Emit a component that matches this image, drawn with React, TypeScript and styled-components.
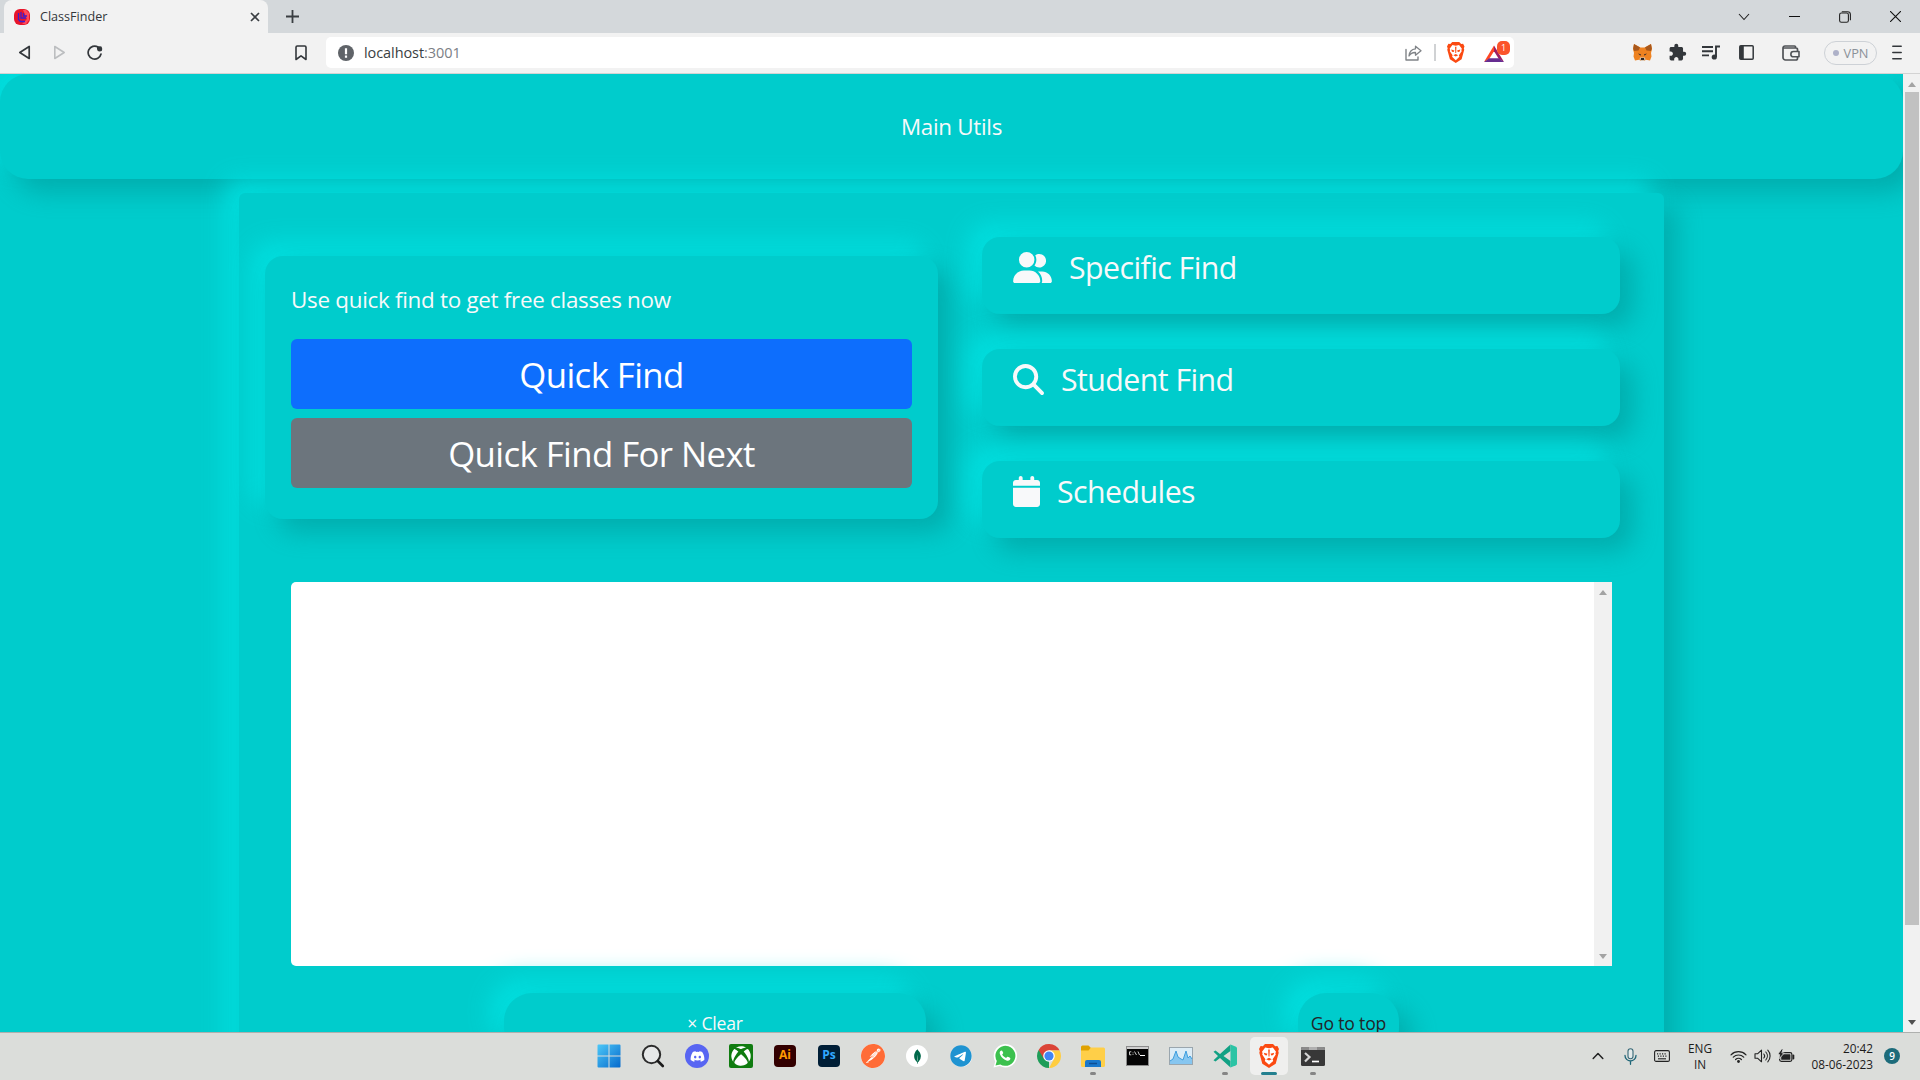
import React from "react";
import styled, { createGlobalStyle } from "styled-components";
import { FaUserGroup, FaMagnifyingGlass, FaCalendar, FaDiscord, FaXbox, FaTelegram } from "react-icons/fa6";
import { SiPostman, SiMongodb } from "react-icons/si";
import { MdExtension } from "react-icons/md";

const Global = createGlobalStyle`
  * { box-sizing: border-box; }
  html, body { margin: 0; padding: 0; }
  body {
    width: 1920px;
    height: 1080px;
    overflow: hidden;
    font-family: "Open Sans", "Noto Sans", sans-serif;
  }
  svg { display: block; flex: none; }
`;

const TEAL = "#00cccc";
const raised = "13px 13px 26px #00adad, -13px -13px 26px #00e0e0";

const Desktop = styled.div`
  width: 1920px;
  height: 1080px;
  display: flex;
  flex-direction: column;
  overflow: hidden;
`;

/* ---------- browser chrome ---------- */

const TabStrip = styled.div`
  height: 33px;
  flex: none;
  background: #d4d8db;
  display: flex;
  align-items: center;
  padding-left: 4px;
`;

const Tab = styled.div`
  width: 264px;
  height: 33px;
  border-radius: 8px 8px 0 0;
  background: #f2f2f2;
  display: flex;
  align-items: center;
  padding: 0 8px 0 10px;
`;

const TabTitle = styled.span`
  flex: 1;
  margin-left: 10px;
  font-size: 12.6px;
  line-height: 16px;
  color: #33373b;
`;

const Slot = styled.div<{ $w: number; $ml?: number }>`
  width: ${(p) => p.$w}px;
  margin-left: ${(p) => p.$ml ?? 0}px;
  flex: none;
  display: flex;
  align-items: center;
  justify-content: center;
`;

const Spacer = styled.div`
  flex: 1;
`;

const Toolbar = styled.div`
  height: 41px;
  flex: none;
  background: #f2f2f2;
  border-bottom: 1px solid #d3d3d3;
  display: flex;
  align-items: center;
  padding: 0 18px 1px 18px;
`;

const AddressBar = styled.div`
  width: 1188px;
  height: 31px;
  margin-left: 19px;
  border-radius: 5px;
  background: #fff;
  display: flex;
  align-items: center;
  padding: 0 4px 0 12px;
`;

const Url = styled.span`
  flex: 1;
  margin-left: 10px;
  font-size: 14.5px;
  letter-spacing: -0.08px;
  line-height: 20px;
  color: #3a3e42;
`;

const Port = styled.span`
  color: #7b8085;
`;

const Divider = styled.div`
  width: 2px;
  height: 17px;
  margin-left: 12px;
  background: #d0d2d4;
`;

const Rewards = styled.div`
  position: relative;
  width: 26px;
  height: 24px;
  margin-left: 18px;
  padding: 4px 0 0 0;
`;

const RewardsBadge = styled.span`
  position: absolute;
  top: 0;
  right: 0;
  width: 13px;
  height: 14px;
  border-radius: 5px;
  background: #fb542b;
  color: #fff;
  font-size: 9px;
  line-height: 14px;
  text-align: center;
`;

const Vpn = styled.div`
  width: 53px;
  height: 24px;
  margin-left: 24px;
  border: 1px solid #cdd1d6;
  border-radius: 12px;
  display: flex;
  align-items: center;
  justify-content: center;
  gap: 5px;
  font-size: 12.8px;
  color: #8a9199;
`;

const VpnDot = styled.i`
  width: 6px;
  height: 6px;
  border-radius: 3px;
  background: #aeb1c8;
`;

/* ---------- page ---------- */

const Viewport = styled.div`
  height: 958px;
  flex: none;
  display: flex;
  overflow: hidden;
`;

const Page = styled.main`
  width: 1903px;
  height: 958px;
  flex: none;
  overflow: hidden;
  background: ${TEAL};
`;

const Scrollbar = styled.div<{ $w: number }>`
  width: ${(p) => p.$w}px;
  flex: none;
  background: #f1f1f1;
  display: flex;
  flex-direction: column;
  align-items: center;
  justify-content: space-between;
  padding: 8px 0 7px;
`;

const Thumb = styled.div`
  width: 14px;
  height: 833px;
  margin-top: 5px;
  margin-bottom: auto;
  background: #c1c1c1;
`;

const Arrow = styled.i<{ $down?: boolean; $color: string }>`
  width: 0;
  height: 0;
  border: 4px solid transparent;
  border-top: ${(p) => (p.$down ? `5px solid ${p.$color}` : "0")};
  border-bottom: ${(p) => (p.$down ? "0" : `5px solid ${p.$color}`)};
`;

const Header = styled.header`
  height: 105px;
  border-radius: 28px;
  background: ${TEAL};
  box-shadow: ${raised};
  display: flex;
  align-items: center;
  justify-content: center;
  font-size: 22.4px;
  letter-spacing: -0.3px;
  line-height: 30px;
  color: #f8f9fa;
`;

const Container = styled.section`
  width: 1425px;
  height: 1000px;
  margin: 14px auto 0;
  border-radius: 6px;
  background: ${TEAL};
  box-shadow: ${raised};
  padding: 44px 44px 0 26px;
`;

const Columns = styled.div`
  display: flex;
  justify-content: space-between;
`;

const QuickCard = styled.div`
  width: 673px;
  height: 263px;
  margin-top: 19px;
  border-radius: 18px;
  background: ${TEAL};
  box-shadow: ${raised};
  padding: 29px 26px 0;
`;

const Hint = styled.p`
  margin: 0 0 24px;
  font-size: 22.4px;
  letter-spacing: -0.28px;
  line-height: 30px;
  color: #f8f9fa;
`;

const ActionButton = styled.button<{ $bg: string }>`
  display: block;
  width: 621px;
  height: 70px;
  margin: 0 0 9px;
  padding: 1px 0 0;
  border: 0;
  border-radius: 6px;
  background: ${(p) => p.$bg};
  color: #fff;
  font-family: inherit;
  font-size: 34.8px;
  letter-spacing: -0.6px;
  line-height: 50px;
`;

const Links = styled.div`
  width: 638px;
  display: flex;
  flex-direction: column;
  gap: 35px;
`;

const LinkCard = styled.a`
  height: 77px;
  border-radius: 18px;
  background: ${TEAL};
  box-shadow: ${raised};
  display: flex;
  align-items: flex-start;
  gap: 17px;
  padding: 15px 30px 0 31px;
  color: #f8f9fa;
`;

const LinkLabel = styled.span`
  margin-top: -4px;
  font-size: 30.3px;
  letter-spacing: -0.55px;
  line-height: 40px;
`;

const Output = styled.div`
  width: 1321px;
  height: 384px;
  margin: 44px 0 0 26px;
  border-radius: 5px 0 0 5px;
  background: #fff;
  display: flex;
  justify-content: flex-end;
  overflow: hidden;
`;

const Footer = styled.div`
  display: flex;
  justify-content: space-between;
  margin-top: 27px;
  padding: 0 221px 0 239px;
`;

const PillButton = styled.button<{ $w: number; $color: string }>`
  width: ${(p) => p.$w}px;
  height: 63px;
  padding: 0 0 3px;
  border: 0;
  border-radius: 28px;
  background: ${TEAL};
  box-shadow: ${raised};
  font-family: inherit;
  font-size: 17.6px;
  letter-spacing: -0.18px;
  line-height: 26px;
  color: ${(p) => p.$color};
`;

/* ---------- taskbar ---------- */

const Taskbar = styled.footer`
  height: 48px;
  flex: none;
  background: #dbddda;
  border-top: 1px solid #aeb0ae;
  display: flex;
  align-items: center;
  padding: 0 20px 1px 587px;
`;

const AppSlot = styled.div<{ $active?: boolean }>`
  position: relative;
  width: 38px;
  height: 38px;
  margin: 0 3px;
  border-radius: 5px;
  background: ${(p) => (p.$active ? "#efefee" : "transparent")};
  display: flex;
  align-items: center;
  justify-content: center;
`;

const Running = styled.i<{ $active?: boolean }>`
  position: absolute;
  left: 50%;
  bottom: 0;
  width: ${(p) => (p.$active ? 16 : 6)}px;
  height: 3px;
  border-radius: 2px;
  background: ${(p) => (p.$active ? "#24808f" : "#858585")};
  transform: translateX(-50%);
`;

const Tile = styled.div<{ $bg: string; $fg: string }>`
  width: 22px;
  height: 22px;
  border-radius: 4px;
  background: ${(p) => p.$bg};
  color: ${(p) => p.$fg};
  font-size: 12px;
  font-weight: 700;
  line-height: 20px;
  text-align: center;
`;

const Disc = styled.div<{ $bg: string; $fg: string; $d?: number }>`
  width: ${(p) => p.$d ?? 24}px;
  height: ${(p) => p.$d ?? 24}px;
  border-radius: 50%;
  background: ${(p) => p.$bg};
  color: ${(p) => p.$fg};
  display: flex;
  align-items: center;
  justify-content: center;
`;

const XboxTile = styled.div`
  width: 24px;
  height: 24px;
  border-radius: 2px;
  background: #107c10;
  color: #fff;
  display: flex;
  align-items: center;
  justify-content: center;
`;

const TrayText = styled.div<{ $w: number; $ml: number; $right?: boolean }>`
  width: ${(p) => p.$w}px;
  margin-left: ${(p) => p.$ml}px;
  font-size: 11.8px;
  line-height: 16px;
  color: #1b1b1b;
  white-space: nowrap;
  text-align: ${(p) => (p.$right ? "right" : "center")};
`;

const CountBadge = styled.div`
  width: 16px;
  height: 16px;
  margin-left: 11px;
  border-radius: 8px;
  background: #1c6b7a;
  color: #fff;
  font-size: 10px;
  font-weight: 600;
  line-height: 16px;
  text-align: center;
`;

/* ---------- drawings ---------- */

const BraveMark = ({ h }: { h: number }) => (
  <svg width={(h * 20) / 24} height={h} viewBox="0 0 20 24">
    <path d="M6 0h8l2.200 2.300 2.200-.2L20 5l-.8 2 .5 1.800-3 11L10 24l-6.700-4.200-3-11L.8 7 0 5l1.600-2.900 2.200.2z" fill="#fb4a12" />
    <path d="M6.200 3.500L10 4.200l3.800-.7 3.200 4.200-.6 1.500.4 1.300-3.200 4.700.6 1.700L10 20.800l-4.200-3.900.6-1.700-3.200-4.700.4-1.300L3 7.700z" fill="#fff" />
    <path d="M4.800 8.700l3.700 1-.9 1.700-1.900-.3zM15.200 8.700l-3.700 1 .9 1.700 1.900-.3zM9.200 5.500h1.600l-.3 7h-1zM7.200 15.200l2.800-1.400 2.800 1.400-2.800 1.300z" fill="#fb4a12" />
  </svg>
);

const Favicon = () => (
  <svg width="16" height="16" viewBox="0 0 16 16">
    <rect width="16" height="16" rx="6" fill="#e8152b" />
    <path d="M9 1h3l3 3v7l-3 4H8l5-5z" fill="#ff4a5c" />
    <path d="M4.500 4v6.500l2 2H11M7 3v6h5M9.500 4v3H13" stroke="#3b1fd0" strokeWidth="1.300" fill="none" />
  </svg>
);

const Chrome = () => (
  <svg width="24" height="24" viewBox="0 0 24 24">
    <path d="M12 12v12A12 12 0 0 1 1.610 6z" fill="#1e9d58" />
    <path d="M12 6.500h10.650A12 12 0 0 0 1.610 6L7 15z" fill="#db4437" />
    <path d="M12 6.500h10.650A12 12 0 0 1 12 24l5-9z" fill="#ffcd40" />
    <circle cx="12" cy="12" r="5.800" fill="#fff" />
    <circle cx="12" cy="12" r="4.600" fill="#4285f4" />
  </svg>
);

const Fox = () => (
  <svg width="19" height="17" viewBox="0 0 19 17">
    <path d="M1 0l6.500 3.500h4L18 0l1 5-1 4 .5 3.500-1.500 4-4-.8L11 17H8l-2-1.300-4 .8-1.500-4L1 9 0 5z" fill="#ee8220" />
    <path d="M1 0l6 3.500L5.500 6.500 1 7 .2 4.500zM18 0l-6 3.500 1.500 3 4.500.5.800-2.500z" fill="#a8581c" />
    <path d="M5 9.500l3 .8-.6 1.400zM14 9.500l-3 .8.600 1.400z" fill="#3a2f2f" />
    <path d="M7 13.500h5l.5 2-1.500 1.500H8l-1.500-1.500z" fill="#d8c8b8" />
    <path d="M8 14h3l.3 2H7.700z" fill="#2b2320" />
  </svg>
);

const line = { fill: "none", strokeLinecap: "round", strokeLinejoin: "round" } as const;

export default function App() {
  return (
    <Desktop>
      <Global />
      <TabStrip>
        <Tab>
          <Favicon />
          <TabTitle>ClassFinder</TabTitle>
          <svg width="10" height="10" viewBox="0 0 10 10"><path d="M1 1l8 8M9 1l-8 8" stroke="#3a3e42" strokeWidth="1.700" /></svg>
        </Tab>
        <Slot $w={13} $ml={18}>
          <svg width="13" height="13" viewBox="0 0 13 13"><path d="M6.500 0v13M0 6.500h13" stroke="#3a3e42" strokeWidth="1.800" /></svg>
        </Slot>
        <Spacer />
        <Slot $w={12}>
          <svg width="12" height="8" viewBox="0 0 12 8"><path d="M1 1l5 5.500L11 1" stroke="#222" strokeWidth="1.100" fill="none" /></svg>
        </Slot>
        <Slot $w={11} $ml={39}>
          <svg width="11" height="11" viewBox="0 0 11 11"><path d="M0 5.500h11" stroke="#111" /></svg>
        </Slot>
        <Slot $w={12} $ml={39}>
          <svg width="12" height="12" viewBox="0 0 12 12">
            <rect x=".6" y="2" width="8.800" height="9.200" rx="1.800" fill="none" stroke="#222" strokeWidth="1.100" />
            <path d="M2.800.7h5.800a2.800 2.800 0 0 1 2.800 2.800v5.800" fill="none" stroke="#222" strokeWidth="1.100" />
          </svg>
        </Slot>
        <Slot $w={11} $ml={39}>
          <svg width="11" height="11" viewBox="0 0 11 11"><path d="M0 0l11 11M11 0L0 11" stroke="#111" strokeWidth="1.100" /></svg>
        </Slot>
        <Slot $w={19} />
      </TabStrip>

      <Toolbar>
        <svg width="13" height="15" viewBox="0 0 13 15"><path d="M11.200 1.500v12L1.800 7.500z" {...line} stroke="#33373b" strokeWidth="1.700" /></svg>
        <Slot $w={13} $ml={22}>
          <svg width="13" height="15" viewBox="0 0 13 15"><path d="M1.800 1.500v12l9.400-6z" {...line} stroke="#bcbec0" strokeWidth="1.600" /></svg>
        </Slot>
        <Slot $w={16} $ml={21}>
          <svg width="16" height="16" viewBox="0 0 16 16">
            <path d="M11 2A6.500 6.500 0 1 0 14 9" {...line} stroke="#33373b" strokeWidth="1.700" />
            <path d="M10 1.500h4.500v4.300H12L10 4z" fill="#33373b" />
            <circle cx="12.700" cy="4" r="2.500" fill="#33373b" />
          </svg>
        </Slot>
        <Slot $w={12} $ml={192}>
          <svg width="12" height="16" viewBox="0 0 12 16"><path d="M1 2.200Q1 1 2.200 1h7.600Q11 1 11 2.200V14.500L6 10.800 1 14.500z" {...line} stroke="#33373b" strokeWidth="1.600" /></svg>
        </Slot>
        <AddressBar>
          <svg width="16" height="16" viewBox="0 0 16 16">
            <circle cx="8" cy="8" r="8" fill="#5f6368" />
            <path d="M8 3.200v6M8 10.600v2.200" stroke="#fff" strokeWidth="2.200" />
          </svg>
          <Url>localhost<Port>:3001</Port></Url>
          <svg width="17" height="16" viewBox="0 0 17 16">
            <path d="M1 4.500V15h12v-3" {...line} stroke="#808488" strokeWidth="1.400" />
            <path d="M10.500 1.200L16 5.800l-5.500 4.400V7.500C7.500 7.300 5.500 8.500 4 11c.3-4 2.500-6.800 6.500-7.200z" {...line} stroke="#808488" strokeWidth="1.300" />
          </svg>
          <Divider />
          <Slot $w={20} $ml={10}><BraveMark h={21} /></Slot>
          <Rewards>
            <svg width="20" height="18" viewBox="0 0 21 18">
              <path d="M10.500 0L0 17.500l5.500-3.500 5-8z" fill="#ff4724" />
              <path d="M10.500 0v6l5 8 5.500 3.500z" fill="#9e1f63" />
              <path d="M0 17.500h21L15.500 13.500h-10z" fill="#662d91" />
            </svg>
            <RewardsBadge>1</RewardsBadge>
          </Rewards>
        </AddressBar>
        <Spacer />
        <Fox />
        <Slot $w={18} $ml={16}><MdExtension size={19} color="#33373b" /></Slot>
        <Slot $w={18} $ml={16}>
          <svg width="18" height="15" viewBox="0 0 18 15">
            <path d="M0 2h11M0 6.200h11M0 10.400h7" stroke="#33373b" strokeWidth="1.900" />
            <path d="M14 12V1.500h4" stroke="#33373b" strokeWidth="1.900" fill="none" />
            <circle cx="12.300" cy="12" r="2.600" fill="#33373b" />
          </svg>
        </Slot>
        <Slot $w={15} $ml={19}>
          <svg width="15" height="15" viewBox="0 0 15 15">
            <rect x=".8" y=".8" width="13.400" height="13.400" rx="1" fill="none" stroke="#33373b" strokeWidth="1.500" />
            <path d="M1 1h3.800v13H1z" fill="#33373b" />
          </svg>
        </Slot>
        <Slot $w={18} $ml={28}>
          <svg width="18" height="16" viewBox="0 0 18 16">
            <path d="M15.500 6V4.500a1.500 1.500 0 0 0-1.500-1.500H2.500M13.500 3V2A1 1 0 0 0 12.500 1H3a2 2 0 0 0-2 2v9.500A2.500 2.500 0 0 0 3.500 15H14a1.500 1.500 0 0 0 1.500-1.500V12" {...line} stroke="#505357" strokeWidth="1.700" />
            <path d="M17 6.500h-5.500a2.600 2.600 0 0 0 0 5.300H17z" {...line} stroke="#505357" strokeWidth="1.600" />
          </svg>
        </Slot>
        <Vpn><VpnDot />VPN</Vpn>
        <Slot $w={10} $ml={15}>
          <svg width="10" height="15" viewBox="0 0 10 15"><path d="M.8 1.200h8.400M.8 7.500h8.400M.8 13.800h8.400" {...line} stroke="#33373b" strokeWidth="1.500" /></svg>
        </Slot>
      </Toolbar>

      <Viewport>
        <Page>
          <Header>Main Utils</Header>
          <Container>
            <Columns>
              <QuickCard>
                <Hint>Use quick find to get free classes now</Hint>
                <ActionButton $bg="#0d6efd">Quick Find</ActionButton>
                <ActionButton $bg="#6c757d">Quick Find For Next</ActionButton>
              </QuickCard>
              <Links>
                <LinkCard><FaUserGroup style={{ width: 39, height: 31 }} /><LinkLabel>Specific Find</LinkLabel></LinkCard>
                <LinkCard><FaMagnifyingGlass size={31} /><LinkLabel>Student Find</LinkLabel></LinkCard>
                <LinkCard><FaCalendar style={{ width: 27, height: 31 }} /><LinkLabel>Schedules</LinkLabel></LinkCard>
              </Links>
            </Columns>
            <Output>
              <Scrollbar $w={18}>
                <Arrow $color="#a3a3a3" />
                <Arrow $down $color="#a3a3a3" />
              </Scrollbar>
            </Output>
            <Footer>
              <PillButton $w={422} $color="#f8f9fa">× Clear</PillButton>
              <PillButton $w={101} $color="#212529">Go to top</PillButton>
            </Footer>
          </Container>
        </Page>
        <Scrollbar $w={17}>
          <Arrow $color="#a3a3a3" />
          <Thumb />
          <Arrow $down $color="#505050" />
        </Scrollbar>
      </Viewport>

      <Taskbar>
        <AppSlot>
          <svg width="24" height="24" viewBox="0 0 24 24">
            <defs>
              <linearGradient id="win" x1="0" y1="0" x2="1" y2="1"><stop offset="0" stopColor="#4cc8f8" /><stop offset="1" stopColor="#0669cc" /></linearGradient>
            </defs>
            <path d="M.5 1.500q0-1 1-1h10v11H.5zM12.500.5h10q1 0 1 1v10h-11zM.5 12.500h11v11h-10q-1 0-1-1zM12.500 12.500h11v10q0 1-1 1h-10z" fill="url(#win)" />
          </svg>
        </AppSlot>
        <AppSlot>
          <svg width="24" height="24" viewBox="0 0 24 24">
            <circle cx="10.500" cy="10.500" r="8.700" fill="#e6e8e8" stroke="#2b2b2b" strokeWidth="2" />
            <path d="M16.800 17l5 5" stroke="#1b1b1b" strokeWidth="2.600" strokeLinecap="round" />
          </svg>
        </AppSlot>
        <AppSlot><Disc $bg="#5865f2" $fg="#fff"><FaDiscord size={15} /></Disc></AppSlot>
        <AppSlot><XboxTile><FaXbox size={20} /></XboxTile></AppSlot>
        <AppSlot><Tile $bg="#330000" $fg="#ff9a00">Ai</Tile></AppSlot>
        <AppSlot><Tile $bg="#001e36" $fg="#31a8ff">Ps</Tile></AppSlot>
        <AppSlot><Disc $bg="#fff" $fg="#ff6c37"><SiPostman size={24} /></Disc></AppSlot>
        <AppSlot><Disc $bg="#fff" $fg="#00684a" $d={22}><SiMongodb size={15} /></Disc></AppSlot>
        <AppSlot><Disc $bg="#fff" $fg="#1f93d1" $d={21}><FaTelegram size={22} /></Disc></AppSlot>
        <AppSlot>
          <svg width="24" height="24" viewBox="0 0 24 24">
            <path d="M.5 23.500l1.700-6A11.700 11.700 0 1 1 6.800 22z" fill="#fff" />
            <path d="M2.500 21.500l1.300-4.600A10 10 0 1 1 7.300 20.400z" fill="#3cc14e" />
            <path d="M8.500 6.500c-1.800 0-2.300 2.300-1.300 4.300 1.300 2.700 3.400 4.700 6.200 5.700 2.500.8 4-.5 4-2.200 0-.7-2.800-2-3.200-1.600l-1.100 1.300c-1.700-.6-3-1.700-3.900-3.400l1-1.400c.2-.5-.9-2.700-1.700-2.700z" fill="#fff" />
          </svg>
        </AppSlot>
        <AppSlot><Chrome /></AppSlot>
        <AppSlot>
          <svg width="24" height="24" viewBox="0 0 24 24">
            <path d="M0 3q0-1.500 1.500-1.500h6L10 4v4H0z" fill="#e0a200" />
            <path d="M0 6.500h7.500l2.500-3h12.500q1.500 0 1.500 1.500v16.500q0 1.500-1.500 1.500h-21Q0 23 0 21.500z" fill="#ffcf48" />
            <path d="M4 23v-5q0-2 2-2h12q2 0 2 2v5z" fill="#1a78cc" />
            <path d="M8 19.500h8" stroke="#0f4f94" strokeWidth="1.500" />
          </svg>
          <Running />
        </AppSlot>
        <AppSlot>
          <svg width="23" height="20" viewBox="0 0 23 20">
            <rect x=".5" y=".5" width="22" height="19" fill="#050505" stroke="#8c8c8c" />
            <path d="M1 1h21v2H1z" fill="#cfcfcf" />
            <path d="M5.300 5.800H3.500v3h1.800M7 6.500v.8M7 8.200V9M8.500 5.500l2 3.500M12 5.500l1.500 3.500" stroke="#e0e0e0" strokeWidth=".9" fill="none" />
            <path d="M14 9.500h5" stroke="#fff" />
          </svg>
        </AppSlot>
        <AppSlot>
          <svg width="24" height="18" viewBox="0 0 24 18">
            <rect x=".5" y=".5" width="23" height="17" fill="#dcecf6" stroke="#9aa6ae" />
            <path d="M1 14l3-2 3-8 2 6 3 2 2 1 3-9 2 7 2-2 2 3v5H1z" fill="#86c6f0" />
            <path d="M1 14l3-2 3-8 2 6 3 2 2 1 3-9 2 7 2-2 2 3" fill="none" stroke="#3e9ede" />
          </svg>
        </AppSlot>
        <AppSlot>
          <svg width="24" height="24" viewBox="0 0 24 24">
            <path d="M17.500.5L7 10 2.500 6.500.5 7.700 5 12 .5 16.300l2 1.200L7 14l10.500 9.500V17L10.500 12l7-5z" fill="#12a184" />
            <path d="M17.500.5L23 2.800q1 .5 1 1.500v15.400q0 1-1 1.500l-5.500 2.300z" fill="#2bc4a5" />
          </svg>
          <Running />
        </AppSlot>
        <AppSlot $active><BraveMark h={24} /><Running $active /></AppSlot>
        <AppSlot>
          <svg width="24" height="19" viewBox="0 0 24 19">
            <rect width="24" height="19" rx="1.500" fill="#383838" />
            <path d="M0 3V1.500Q0 0 1.500 0h21Q24 0 24 1.500V3z" fill="#8b8b8b" />
            <path d="M8 0h8v3H8z" fill="#b0b0b0" />
            <path d="M4 6l4.500 4L4 14.500" stroke="#d5d5d5" strokeWidth="2.200" fill="none" />
            <path d="M11 14.500h7" stroke="#fff" strokeWidth="1.700" />
          </svg>
          <Running />
        </AppSlot>
        <Spacer />
        <svg width="12" height="8" viewBox="0 0 12 8"><path d="M1.200 6.500L6 1.500l4.800 5" {...line} stroke="#222" strokeWidth="1.500" /></svg>
        <Slot $w={13} $ml={20}>
          <svg width="13" height="17" viewBox="0 0 13 17">
            <rect x="4" y=".7" width="5" height="10" rx="2.500" fill="#e3eaea" stroke="#376877" strokeWidth="1.100" />
            <path d="M1 7.500a5.500 5.500 0 0 0 11 0M6.500 13v3.300" {...line} stroke="#1d6577" strokeWidth="1.300" />
          </svg>
        </Slot>
        <Slot $w={16} $ml={17}>
          <svg width="16" height="12" viewBox="0 0 16 12">
            <rect x=".6" y=".6" width="14.800" height="10.800" rx="1.500" fill="none" stroke="#222" strokeWidth="1.100" />
            <path d="M3 3.800h10M3.800 6.200h9" stroke="#222" strokeWidth="1.200" strokeDasharray="1.200 1.300" />
            <path d="M4 8.800h8" stroke="#222" strokeWidth="1.100" />
          </svg>
        </Slot>
        <TrayText $w={30} $ml={15}>ENG<br />IN</TrayText>
        <Slot $w={17} $ml={15}>
          <svg width="17" height="13" viewBox="0 0 17 13">
            <path d="M1 4.800a10.600 10.600 0 0 1 15 0M3.300 7.200a7.300 7.300 0 0 1 10.400 0M5.600 9.500a4.200 4.200 0 0 1 5.800 0" {...line} stroke="#222" strokeWidth="1.200" />
            <circle cx="8.500" cy="11.500" r="1.400" fill="#222" />
          </svg>
        </Slot>
        <Slot $w={17} $ml={7}>
          <svg width="17" height="14" viewBox="0 0 17 14">
            <path d="M1 4.800h2.500L7.500 1.200v11.600L3.500 9.200H1z" {...line} stroke="#222" strokeWidth="1.100" />
            <path d="M9.800 5a3 3 0 0 1 0 4M11.800 3a6 6 0 0 1 0 8M13.800 1.200a8.500 8.500 0 0 1 0 11.600" {...line} stroke="#222" strokeWidth="1.100" />
          </svg>
        </Slot>
        <Slot $w={17} $ml={7}>
          <svg width="17" height="14" viewBox="0 0 17 14">
            <rect x="1.600" y="3.600" width="12.300" height="8.800" rx="1.800" fill="none" stroke="#222" strokeWidth="1.200" />
            <rect x="3.200" y="5.200" width="9.200" height="5.600" rx=".6" fill="#222" />
            <path d="M15.400 6.500v3" stroke="#222" strokeWidth="1.800" strokeLinecap="round" />
            <path d="M3.800-.3L-.5 5.600h2.200L1 9.800 6.300 4H3.900L5.200-.3z" fill="#222" stroke="#dbddda" strokeWidth=".9" />
          </svg>
        </Slot>
        <TrayText $w={64} $ml={14} $right>20:42<br />08-06-2023</TrayText>
        <CountBadge>9</CountBadge>
      </Taskbar>
    </Desktop>
  );
}
